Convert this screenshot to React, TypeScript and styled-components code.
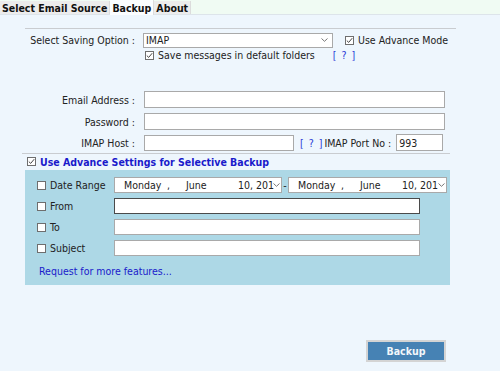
import React from "react";
import styled, { createGlobalStyle } from "styled-components";

const Global = createGlobalStyle`
  html, body { margin: 0; padding: 0; }
  body {
    background: #eef6fd;
    font-family: "DejaVu Sans Condensed", "DejaVu Sans", Tahoma, sans-serif;
    font-size: 10.5px;
    color: #222;
  }
`;

const Page = styled.div`
  width: 500px;
  height: 371px;
  display: flex;
  flex-direction: column;
  background: #eef6fd;
  overflow: hidden;
`;

const TabBar = styled.div`
  height: 14px;
  display: flex;
  align-items: flex-end;
  background: #f0fbf3;
  border-bottom: 1px solid #dde4ea;
`;

const Tab = styled.div<{ $active?: boolean }>`
  height: ${(p) => (p.$active ? 15 : 13)}px;
  margin-bottom: ${(p) => (p.$active ? -1 : 0)}px;
  padding: 0 2px;
  display: flex;
  align-items: center;
  font-weight: bold;
  font-size: 10.5px;
  color: #111;
  background: ${(p) => (p.$active ? "#fbfdff" : "#ececec")};
  border-right: 1px solid #dcdcdc;
`;

const Content = styled.div`
  display: flex;
  flex-direction: column;
  padding-left: 25px;
`;

const TopGroup = styled.div`
  margin-top: 13px;
  width: 431px;
  border-top: 1px solid #c9ccd0;
  padding-top: 3px;
  display: flex;
  flex-direction: column;
`;

const Row = styled.div<{ $h?: number; $mt?: number }>`
  display: flex;
  align-items: center;
  height: ${(p) => p.$h ?? 16}px;
  margin-top: ${(p) => p.$mt ?? 0}px;
`;

const Label = styled.div<{ $w?: number }>`
  width: ${(p) => p.$w ?? 110}px;
  text-align: right;
  white-space: nowrap;
  flex-shrink: 0;
`;

const Box = styled.div<{ $w: number; $h?: number; $ml?: number; $dark?: boolean; $pl?: number }>`
  width: ${(p) => p.$w}px;
  height: ${(p) => p.$h ?? 15}px;
  margin-left: ${(p) => p.$ml ?? 0}px;
  box-sizing: border-box;
  background: #fff;
  border: 1px solid ${(p) => (p.$dark ? "#4a4a4a" : "#a9a9a9")};
  display: flex;
  align-items: center;
  padding-left: ${(p) => p.$pl ?? 2}px;
  position: relative;
  flex-shrink: 0;
  white-space: nowrap;
  overflow: hidden;
`;

const Chevron = styled.svg<{ $r: number }>`
  position: absolute;
  right: ${(p) => p.$r}px;
  top: 50%;
  margin-top: -2px;
  background: #fff;
`;

const Check = styled.span`
  width: 9px;
  height: 9px;
  box-sizing: border-box;
  border: 1px solid #6e6e6e;
  background: #fff;
  display: inline-flex;
  align-items: center;
  justify-content: center;
  flex-shrink: 0;
  margin-right: 4px;
`;

const CheckItem = styled.div<{ $ml?: number; $bold?: boolean; $blue?: boolean }>`
  display: flex;
  align-items: center;
  margin-left: ${(p) => p.$ml ?? 0}px;
  white-space: nowrap;
  font-weight: ${(p) => (p.$bold ? "bold" : "normal")};
  color: ${(p) => (p.$blue ? "#1a1acb" : "#222")};
`;

const Help = styled.span<{ $ml?: number }>`
  color: #2b39d6;
  margin-left: ${(p) => p.$ml ?? 0}px;
  white-space: nowrap;
  letter-spacing: 1px;
`;

const PortLabel = styled.span`
  margin-left: 1px;
  white-space: nowrap;
`;

const Divider = styled.div`
  width: 428px;
  margin-left: -3px;
  border-top: 1px solid #c9ccd0;
  margin-top: 2px;
`;

const Panel = styled.div`
  margin-top: 2px;
  width: 425px;
  height: 115px;
  background: #add8e6;
  box-sizing: border-box;
  padding: 7px 0 0 12px;
  display: flex;
  flex-direction: column;
`;

const PanelLabel = styled.div`
  width: 77px;
  flex-shrink: 0;
  display: flex;
  align-items: center;
  white-space: nowrap;
`;

const DateText = styled.span<{ $w: number }>`
  display: inline-block;
  width: ${(p) => p.$w}px;
  flex-shrink: 0;
`;

const Dash = styled.span`
  width: 6px;
  text-align: center;
  flex-shrink: 0;
`;

const Link = styled.div`
  color: #1a1acb;
  margin-top: 9px;
  margin-left: 2px;
`;

const Footer = styled.div`
  display: flex;
  justify-content: flex-end;
  padding-right: 54px;
  margin-top: 55px;
`;

const Button = styled.button`
  width: 80px;
  height: 22px;
  background: #4682b4;
  border: 2px solid #d4d4d4;
  color: #f2f6fa;
  font-family: inherit;
  font-weight: bold;
  font-size: 10.5px;
  padding: 0;
`;

const CheckMark = () => (
  <svg width="7" height="7" viewBox="0 0 7 7">
    <path d="M0.8 3.6 L2.7 5.4 L6.2 1.2" fill="none" stroke="#444" strokeWidth="1" />
  </svg>
);

const ChevronIcon = ({ r = 4 }: { r?: number }) => (
  <Chevron $r={r} width="7" height="4" viewBox="0 0 7 4">
    <path d="M0.5 0.5 L3.5 3.3 L6.5 0.5" fill="none" stroke="#777" strokeWidth="1" />
  </Chevron>
);

const DateBox = ({ w, june }: { w: number; june: number }) => (
  <Box $w={w} $h={16} $pl={9}>
    <DateText $w={43}>Monday</DateText>
    <DateText $w={19}>,</DateText>
    <DateText $w={june}>June</DateText>
    <span>10, 201</span>
    <ChevronIcon r={1} />
  </Box>
);

export default function App() {
  return (
    <Page>
      <Global />
      <TabBar>
        <Tab>Select Email Source</Tab>
        <Tab $active>Backup</Tab>
        <Tab>About</Tab>
      </TabBar>
      <Content>
        <TopGroup>
          <Row>
            <Label>Select Saving Option :</Label>
            <Box $w={190} $ml={8}>
              IMAP
              <ChevronIcon />
            </Box>
            <CheckItem $ml={12}>
              <Check>
                <CheckMark />
              </Check>
              Use Advance Mode
            </CheckItem>
          </Row>
          <Row $h={12} $mt={1}>
            <CheckItem $ml={120}>
              <Check>
                <CheckMark />
              </Check>
              Save messages in default folders
            </CheckItem>
            <Help $ml={18}>[ ? ]</Help>
          </Row>
          <Row $h={17} $mt={30}>
            <Label>Email Address :</Label>
            <Box $w={301} $h={17} $ml={9} />
          </Row>
          <Row $h={17} $mt={5}>
            <Label>Password :</Label>
            <Box $w={301} $h={17} $ml={9} />
          </Row>
          <Row $h={17} $mt={4}>
            <Label>IMAP Host :</Label>
            <Box $w={150} $h={16} $ml={9} />
            <Help $ml={6}>[ ? ]</Help>
            <PortLabel>IMAP Port No :</PortLabel>
            <Box $w={47} $h={17} $ml={5}>
              993
            </Box>
          </Row>
          <Divider />
          <Row $h={13} $mt={1}>
            <CheckItem $ml={2} $bold $blue>
              <Check>
                <CheckMark />
              </Check>
              Use Advance Settings for Selective Backup
            </CheckItem>
          </Row>
        </TopGroup>
        <Panel>
          <Row>
            <PanelLabel>
              <Check />
              Date Range
            </PanelLabel>
            <DateBox w={168} june={52} />
            <Dash>-</Dash>
            <DateBox w={159} june={42} />
          </Row>
          <Row $mt={5}>
            <PanelLabel>
              <Check />
              From
            </PanelLabel>
            <Box $w={306} $h={16} $dark />
          </Row>
          <Row $mt={5}>
            <PanelLabel>
              <Check />
              To
            </PanelLabel>
            <Box $w={306} $h={16} />
          </Row>
          <Row $mt={5}>
            <PanelLabel>
              <Check />
              Subject
            </PanelLabel>
            <Box $w={306} $h={16} />
          </Row>
          <Link>Request for more features...</Link>
        </Panel>
        <Footer>
          <Button>Backup</Button>
        </Footer>
      </Content>
    </Page>
  );
}
